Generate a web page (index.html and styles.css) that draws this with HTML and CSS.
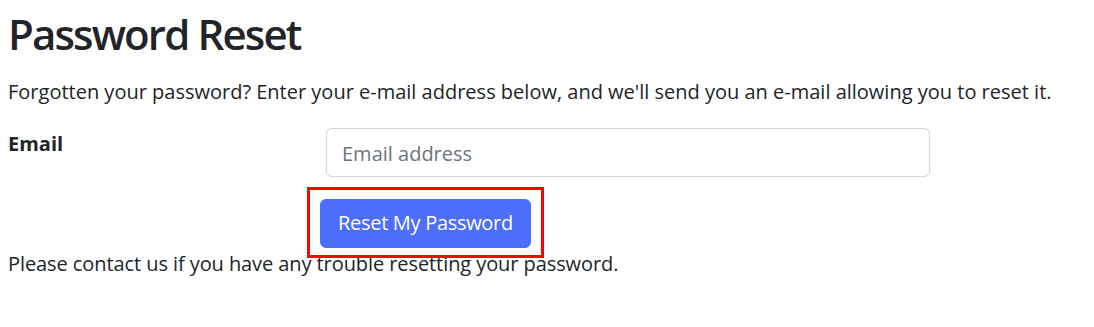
FILE: index.html
```html
<!DOCTYPE html>
<html lang="en">
<head>
<meta charset="utf-8">
<title>Password Reset</title>
<link rel="stylesheet" href="styles.css">
</head>
<body>
<main class="page">
  <h1 class="title">Password Reset</h1>
  <p class="intro">Forgotten your password? Enter your e-mail address below, and we'll send you an e-mail allowing you to reset it.</p>
  <form class="reset-form">
    <div class="field-row">
      <label class="field-label" for="email">Email</label>
      <input class="field-input" id="email" type="email" placeholder="Email address">
    </div>
    <div class="actions">
      <span class="btn-wrap">
        <button class="btn-primary" type="submit">Reset My Password</button>
        <span class="highlight"></span>
      </span>
    </div>
  </form>
  <p class="note">Please contact us if you have any trouble resetting your password.</p>
</main>
</body>
</html>
```

FILE: styles.css
```css
* { box-sizing: border-box; }

html, body {
  margin: 0;
  padding: 0;
  background: #ffffff;
}

body {
  font-family: "Open Sans", "Noto Sans", "Liberation Sans", sans-serif;
  font-size: 20px;
  line-height: 30px;
  color: #212529;
}

.page {
  padding: 0 8px;
}

.title {
  margin: 0;
  padding-top: 4px;
  font-size: 42px;
  line-height: 60px;
  font-weight: 600;
  letter-spacing: -1.85px;
}

.intro {
  margin: 13px 0 0 0;
}

.reset-form {
  margin: 0;
}

.field-row {
  margin-top: 21px;
  display: grid;
  grid-template-columns: 318px 604px;
  align-items: start;
}

.field-label {
  font-weight: 700;
  padding-top: 1px;
}

.field-input {
  font-family: inherit;
  font-size: 20px;
  line-height: 30px;
  height: 49px;
  padding: 9px 15px 8px 15px;
  border: 1px solid #ced4da;
  border-radius: 6px;
  color: #212529;
  background: #ffffff;
  width: 100%;
}

.field-input::placeholder {
  color: #6c757d;
}

.actions {
  margin-top: 22px;
  padding-left: 312px;
  display: flex;
}

.btn-wrap {
  position: relative;
  display: inline-flex;
}

.btn-primary {
  font-family: inherit;
  font-size: 20px;
  line-height: 30px;
  letter-spacing: -0.3px;
  height: 49px;
  padding: 8px 17px 9px 17px;
  border: 1px solid #4d6ef9;
  border-radius: 6px;
  background: #4d6ef9;
  color: #ffffff;
  cursor: pointer;
}

.highlight {
  position: absolute;
  left: -13px;
  right: -13px;
  top: -12px;
  bottom: -10px;
  border: 3px solid #ff0000;
  pointer-events: none;
}

.note {
  margin: 1px 0 0 0;
  letter-spacing: -0.08px;
}
```
